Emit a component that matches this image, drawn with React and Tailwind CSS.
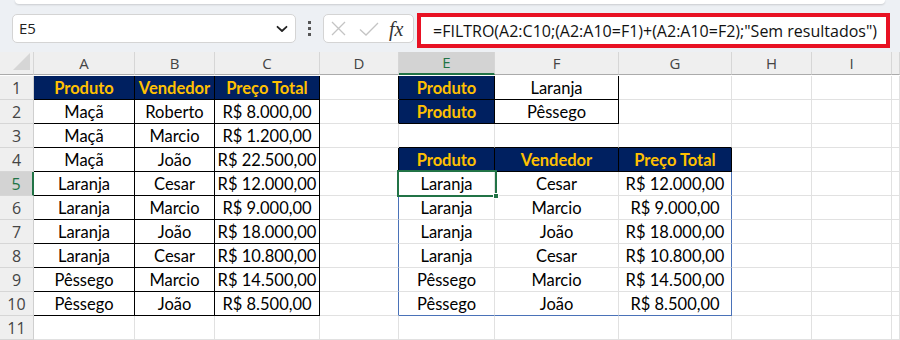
import React from "react";

const CELL = "Lato, 'Open Sans', sans-serif";
const UI = "'Open Sans', 'Noto Sans', sans-serif";

const K = {
  g: "bg-white border-r border-b border-r-[#e1e1e1] border-b-[#e1e1e1]",
  h: "bg-[#002060] border-r border-b border-r-black border-b-black text-[#ffc000] font-bold",
  k: "bg-white border-r border-b border-r-black border-b-black",
  gb: "bg-white border-r border-b border-r-[#e1e1e1] border-b-black",
  dr: "bg-white border-r border-b border-r-black border-b-[#e1e1e1]",
  db: "bg-white border-r border-b border-r-[#4a72b8] border-b-[#e1e1e1]",
  s: "bg-white border-r border-b border-r-[#e1e1e1] border-b-[#e1e1e1]",
  sr: "bg-white border-r border-b border-r-[#4a72b8] border-b-[#e1e1e1]",
  sb: "bg-white border-r border-b border-r-[#e1e1e1] border-b-[#4a72b8]",
  sbr: "bg-white border-r border-b border-r-[#4a72b8] border-b-[#4a72b8]",
};

const t1 = [
  ["Maçã", "Roberto", "R$ 8.000,00"],
  ["Maçã", "Marcio", "R$ 1.200,00"],
  ["Maçã", "João", "R$ 22.500,00"],
  ["Laranja", "Cesar", "R$ 12.000,00"],
  ["Laranja", "Marcio", "R$ 9.000,00"],
  ["Laranja", "João", "R$ 18.000,00"],
  ["Laranja", "Cesar", "R$ 10.800,00"],
  ["Pêssego", "Marcio", "R$ 14.500,00"],
  ["Pêssego", "João", "R$ 8.500,00"],
];
const spill = t1.slice(3);

function buildRows() {
  const rows = [];
  rows.push([
    ["h", "Produto"], ["h", "Vendedor"], ["h", "Preço Total"], ["dr", ""],
    ["h", "Produto"], ["k", "Laranja"], ["g", ""], ["g", ""], ["g", ""], ["g", ""],
  ]);
  rows.push([
    ["k", t1[0][0]], ["k", t1[0][1]], ["k", t1[0][2]], ["dr", ""],
    ["h", "Produto"], ["k", "Pêssego"], ["g", ""], ["g", ""], ["g", ""], ["g", ""],
  ]);
  rows.push([
    ["k", t1[1][0]], ["k", t1[1][1]], ["k", t1[1][2]], ["g", ""],
    ["gb", ""], ["gb", ""], ["gb", ""], ["g", ""], ["g", ""], ["g", ""],
  ]);
  rows.push([
    ["k", t1[2][0]], ["k", t1[2][1]], ["k", t1[2][2]], ["dr", ""],
    ["h", "Produto"], ["h", "Vendedor"], ["h", "Preço Total"], ["g", ""], ["g", ""], ["g", ""],
  ]);
  spill.forEach((r, i) => {
    const last = i === spill.length - 1;
    rows.push([
      ["k", t1[3 + i][0]], ["k", t1[3 + i][1]], ["k", t1[3 + i][2]], ["db", ""],
      [last ? "sb" : "s", r[0]], [last ? "sb" : "s", r[1]], [last ? "sbr" : "sr", r[2]],
      ["g", ""], ["g", ""], ["g", ""],
    ]);
  });
  rows.push([
    ["g", ""], ["g", ""], ["g", ""], ["g", ""],
    ["g", ""], ["g", ""], ["g", ""], ["g", ""], ["g", ""], ["g", ""],
  ]);
  return rows;
}

const letters = ["A", "B", "C", "D", "E", "F", "G", "H", "I", ""];

export default function App() {
  const rows = buildRows();
  return (
    <div className="w-[900px] h-[340px] overflow-hidden bg-white">
      {/* toolbar */}
      <div className="h-[52px] bg-[#edf0f4] relative">
        <div className="mx-[15px] h-[4px] bg-white rounded-b-[6px] shadow-[0_1px_2px_rgba(0,0,0,0.15)]" />
        <div className="flex items-start pt-[10px] pl-[12px]">
          <div
            className="w-[284px] h-[29px] bg-white border border-[#d4d4d4] rounded-[5px] flex items-center justify-between pl-[6px] pr-[7px] text-[15px] text-[#222]"
            style={{ fontFamily: UI }}
          >
            <span>E5</span>
            <svg width="12" height="8" viewBox="0 0 12 8">
              <path d="M1.5 1.8 L6 6 L10.5 1.8" fill="none" stroke="#222" strokeWidth="1.8" strokeLinecap="round" strokeLinejoin="round" />
            </svg>
          </div>
          <div className="w-[27px] h-[29px] flex flex-col items-center justify-center gap-[3px]">
            <div className="w-[3px] h-[3px] bg-[#555]" />
            <div className="w-[3px] h-[3px] bg-[#555]" />
            <div className="w-[3px] h-[3px] bg-[#555]" />
          </div>
          <div className="w-[91px] h-[29px] bg-white border border-[#d4d4d4] rounded-[5px] flex items-center pl-[7px]">
            <svg width="15" height="15" viewBox="0 0 15 15">
              <path d="M1 1 L14 14 M14 1 L1 14" stroke="#c4c4c4" strokeWidth="1.3" />
            </svg>
            <svg className="ml-[13px]" width="20" height="14" viewBox="0 0 20 14">
              <path d="M1 7.5 L7 13 L19 1" fill="none" stroke="#c4c4c4" strokeWidth="1.3" />
            </svg>
            <span
              className="ml-[10px] text-[20px] italic text-[#333] leading-none"
              style={{ fontFamily: "'Liberation Serif', 'DejaVu Serif', serif" }}
            >
              fx
            </span>
          </div>
          <div className="ml-[3px] -mt-[1px] w-[473px] h-[35px] border-[4px] border-[#e81123] bg-white flex items-center pl-[12px]">
            <span className="text-[16px] text-[#111] whitespace-nowrap" style={{ fontFamily: UI }}>
              =FILTRO(A2:C10;(A2:A10=F1)+(A2:A10=F2);"Sem resultados")
            </span>
          </div>
        </div>
      </div>

      {/* sheet */}
      <div className="relative">
        <div className="grid grid-cols-[34px_101px_80px_105px_79px_96px_124px_113px_80px_80px_1fr] auto-rows-[24px]">
          <div className="h-[23px] bg-[#efefef] border-r border-b border-r-[#d6d6d6] border-b-[#ababab] relative">
            <svg className="absolute right-[3px] bottom-[4px]" width="17" height="17" viewBox="0 0 17 17">
              <path d="M17 0 L17 17 L0 17 Z" fill="#d6d6d6" />
            </svg>
          </div>
          {letters.map((l, i) =>
            i === 4 ? (
              <div
                key={i}
                className="h-[23px] bg-[#d3d3d3] border-r border-r-[#d6d6d6] border-b-[2px] border-b-[#217346] flex items-center justify-center text-[15px] text-[#217346]"
                style={{ fontFamily: UI }}
              >
                {l}
              </div>
            ) : (
              <div
                key={i}
                className="h-[23px] bg-[#efefef] border-r border-b border-r-[#d6d6d6] border-b-[#ababab] flex items-center justify-center text-[15px] text-[#444]"
                style={{ fontFamily: UI }}
              >
                {l}
              </div>
            )
          )}
          {rows.map((r, ri) => (
            <React.Fragment key={ri}>
              {ri === 4 ? (
                <div
                  className="bg-[#d3d3d3] border-r-[2px] border-b border-r-[#217346] border-b-[#d6d6d6] flex items-center justify-center text-[16px] text-[#217346]"
                  style={{ fontFamily: UI }}
                >
                  {ri + 1}
                </div>
              ) : (
                <div
                  className="bg-[#efefef] border-r border-b border-r-[#cfcfcf] border-b-[#d6d6d6] flex items-center justify-center text-[16px] text-[#444]"
                  style={{ fontFamily: UI }}
                >
                  {ri + 1}
                </div>
              )}
              {r.map(([k, txt], ci) => (
                <div
                  key={ci}
                  className={`${K[k]} flex items-center justify-center text-[16.5px] leading-none pt-[1px] whitespace-nowrap overflow-hidden`}
                  style={{ fontFamily: CELL }}
                >
                  {txt}
                </div>
              ))}
            </React.Fragment>
          ))}
        </div>
        <div className="absolute left-[397px] top-[118px] w-[100px] h-[27px] border-[2px] border-[#217346] pointer-events-none">
          <div className="absolute -right-[4px] -bottom-[4px] w-[6px] h-[6px] bg-[#217346] border border-white" />
        </div>
      </div>
    </div>
  );
}
